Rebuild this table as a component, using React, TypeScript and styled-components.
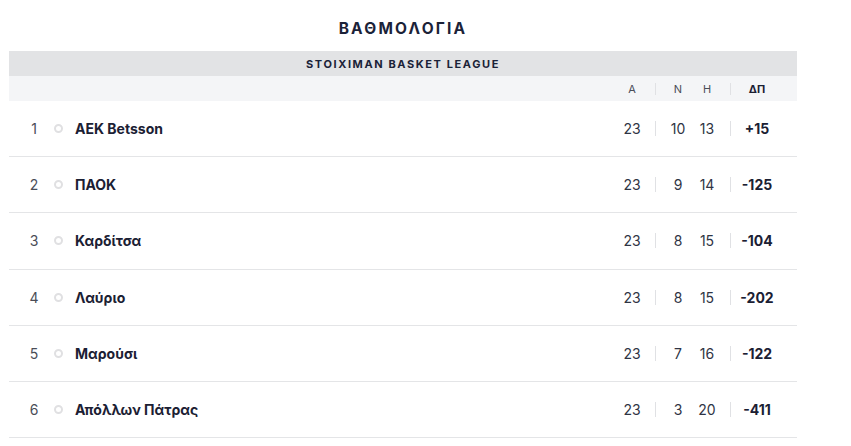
import { FC } from 'react';
import styled, { createGlobalStyle } from 'styled-components';

const GlobalStyle = createGlobalStyle`
  body {
    margin: 0;
    background: #ffffff;
    font-family: Inter, "Noto Sans", sans-serif;
    color: #1b2033;
  }
`;

const Wrapper = styled.div`
  width: 788px;
  padding-left: 9px;
`;

const Title = styled.h2`
  margin: 0;
  height: 51px;
  padding-top: 5px;
  box-sizing: border-box;
  display: flex;
  align-items: center;
  justify-content: center;
  font-size: 15.5px;
  font-weight: 700;
  letter-spacing: 2.2px;
  color: #1b2238;
`;

const LeagueBar = styled.div`
  height: 25px;
  background: #e2e3e5;
  display: flex;
  align-items: center;
  justify-content: center;
  font-size: 11px;
  font-weight: 700;
  letter-spacing: 1.6px;
  color: #1b2238;
`;

const HeadRow = styled.div`
  height: 25px;
  background: #f4f5f7;
  display: flex;
  align-items: center;
  justify-content: flex-end;
`;

const Row = styled.div`
  height: 56.2px;
  box-sizing: border-box;
  border-bottom: 1px solid #e4e5e7;
  display: flex;
  align-items: center;
  padding-left: 15px;
`;

const Rank = styled.span`
  width: 20px;
  text-align: center;
  font-size: 14px;
  color: #4a4d57;
`;

const Dot = styled.span`
  width: 9px;
  height: 9px;
  box-sizing: border-box;
  border: 2px solid #e0e0e2;
  border-radius: 50%;
  margin-left: 10px;
`;

const Name = styled.span`
  flex: 1;
  margin-left: 12px;
  font-size: 14px;
  font-weight: 700;
  color: #1b2033;
`;

const Stats = styled.div`
  display: flex;
  align-items: center;
  padding-right: 14px;
`;

const Cell = styled.span<{ $w: number; $bold?: boolean; $head?: boolean; $gap?: number }>`
  width: ${p => p.$w}px;
  margin-left: ${p => p.$gap ?? 0}px;
  text-align: center;
  font-size: ${p => (p.$head ? 11 : 14)}px;
  font-weight: ${p => (p.$bold ? 700 : 400)};
  color: ${p => (p.$bold ? '#1b2033' : p.$head ? '#4a4d57' : '#2f3444')};
`;

const Sep = styled.span<{ $head?: boolean; $gap?: number }>`
  width: 1px;
  height: ${p => (p.$head ? 12 : 15)}px;
  margin-left: ${p => p.$gap ?? 0}px;
  background: #e0e1e4;
`;

interface ITeam {
  name: string;
  played: number;
  wins: number;
  losses: number;
  diff: string;
}

const teams: ITeam[] = [
  { name: 'AEK Betsson', played: 23, wins: 10, losses: 13, diff: '+15' },
  { name: 'ΠΑΟΚ', played: 23, wins: 9, losses: 14, diff: '-125' },
  { name: 'Καρδίτσα', played: 23, wins: 8, losses: 15, diff: '-104' },
  { name: 'Λαύριο', played: 23, wins: 8, losses: 15, diff: '-202' },
  { name: 'Μαρούσι', played: 23, wins: 7, losses: 16, diff: '-122' },
  { name: 'Απόλλων Πάτρας', played: 23, wins: 3, losses: 20, diff: '-411' },
];

const StatCells: FC<{ a: string | number; n: string | number; h: string | number; d: string; head?: boolean }> = ({ a, n, h, d, head }) => (
  <Stats>
    <Cell $w={46} $head={head}>{a}</Cell>
    <Sep $head={head} />
    <Cell $w={28} $gap={8} $head={head}>{n}</Cell>
    <Cell $w={30} $head={head}>{h}</Cell>
    <Sep $head={head} $gap={8} />
    <Cell $w={52} $bold $head={head}>{d}</Cell>
  </Stats>
);

const App: FC = () => (
  <Wrapper>
    <GlobalStyle />
    <Title>ΒΑΘΜΟΛΟΓΙΑ</Title>
    <LeagueBar>STOIXIMAN BASKET LEAGUE</LeagueBar>
    <HeadRow>
      <StatCells a="A" n="N" h="H" d="ΔΠ" head />
    </HeadRow>
    {teams.map((team, i) => (
      <Row key={team.name}>
        <Rank>{i + 1}</Rank>
        <Dot />
        <Name>{team.name}</Name>
        <StatCells a={team.played} n={team.wins} h={team.losses} d={team.diff} />
      </Row>
    ))}
  </Wrapper>
);

export default App;
